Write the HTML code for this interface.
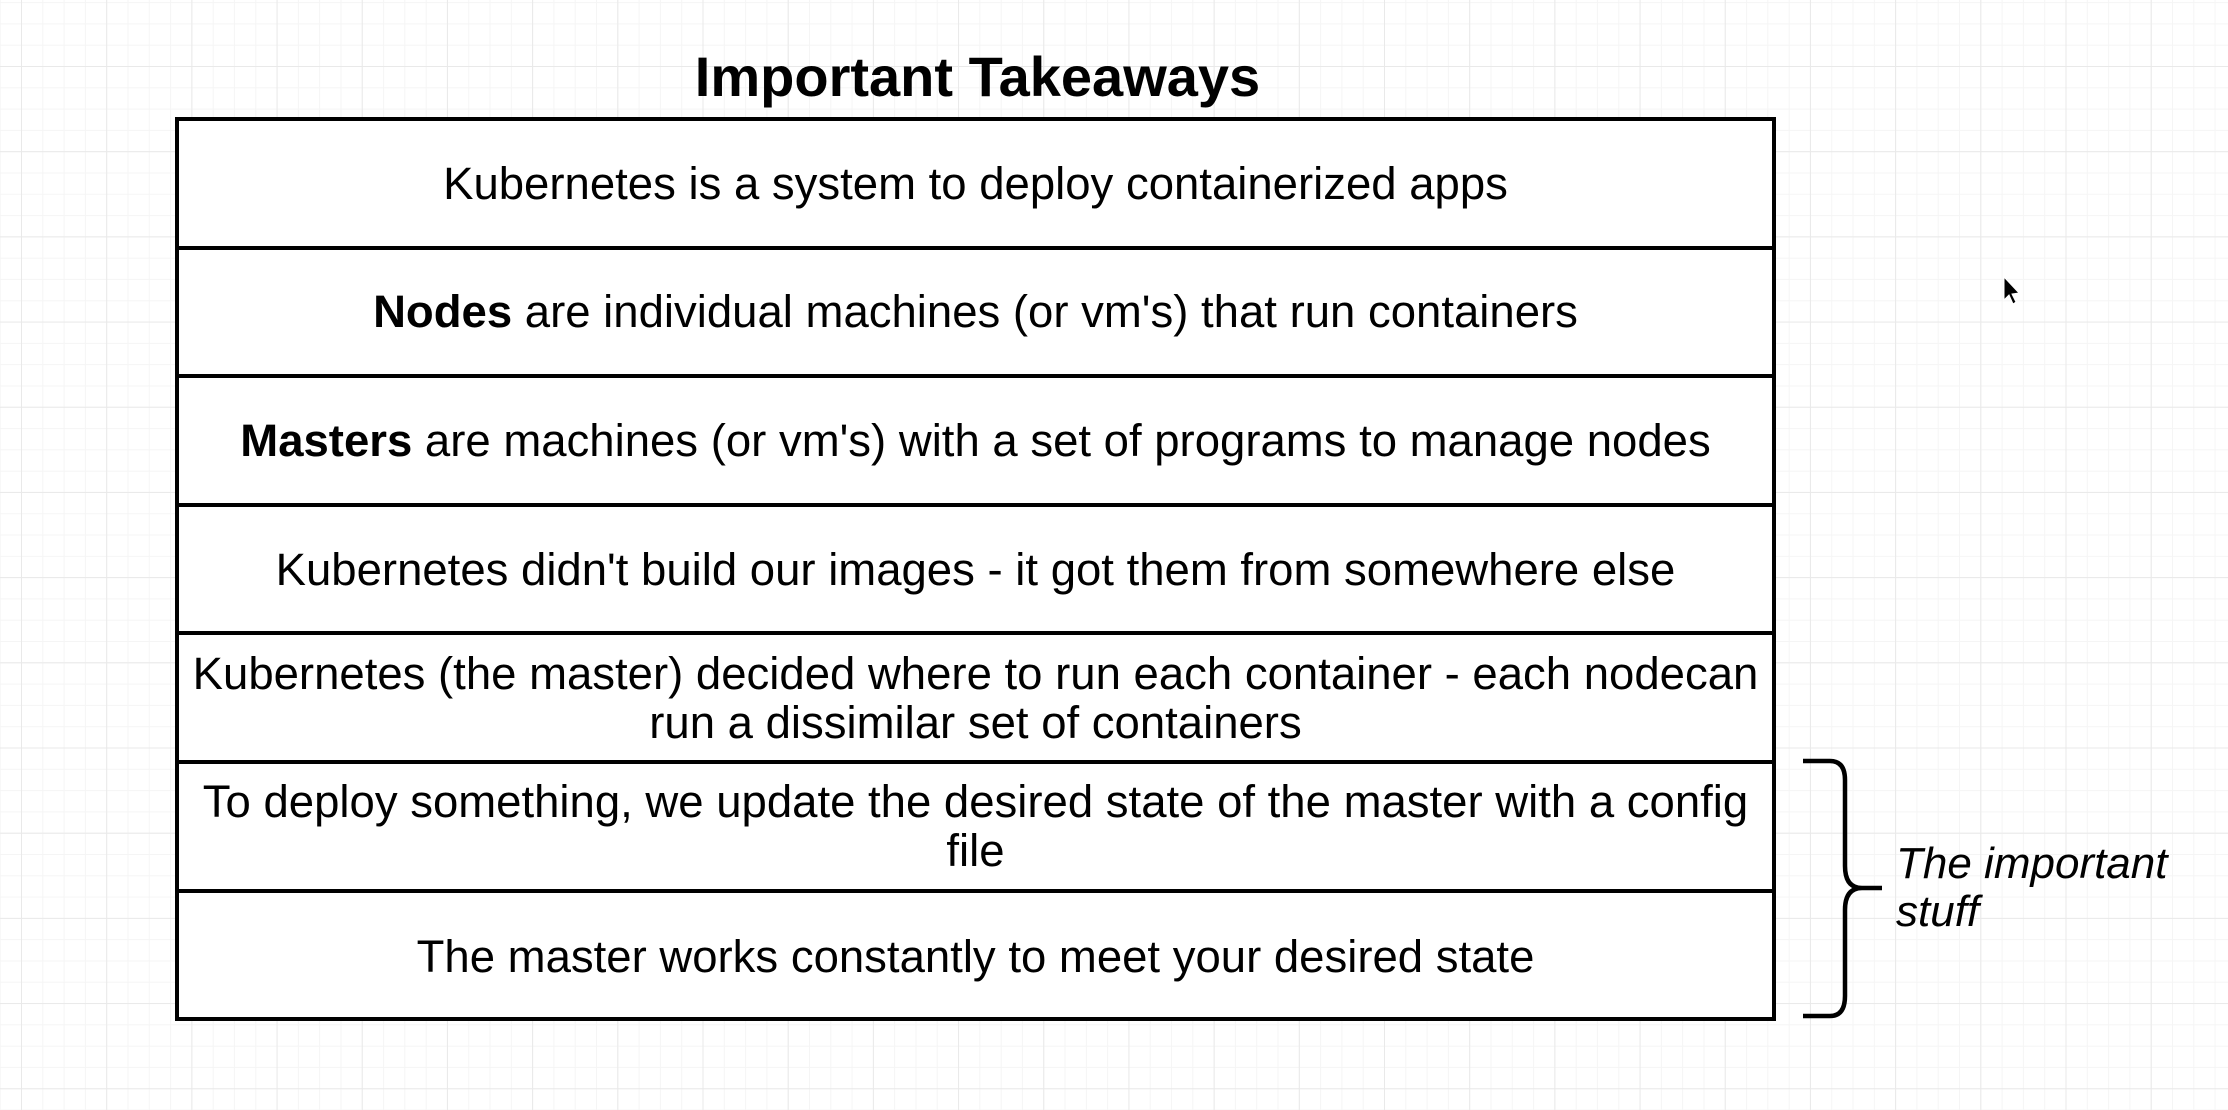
<!DOCTYPE html>
<html><head><meta charset="utf-8"><style>
html,body{margin:0;padding:0}
body{width:2228px;height:1110px;position:relative;overflow:hidden;background:#fff;
font-family:"Liberation Sans",Arial,sans-serif;
background-image:
linear-gradient(to right,#e9e9e9 1px,transparent 1px),
linear-gradient(to bottom,#e9e9e9 1px,transparent 1px),
linear-gradient(to right,#f5f5f5 1px,transparent 1px),
linear-gradient(to bottom,#f5f5f5 1px,transparent 1px);
background-size:85.2px 85.2px,85.2px 85.2px,21.3px 21.3px,21.3px 21.3px;
background-position:21px 66px,21px 66px,21px 66px,21px 66px;}
.title{position:absolute;left:0;width:1955px;top:44px;text-align:center;font-weight:bold;font-size:56px;line-height:66px;color:#000}
.tbl{position:absolute;left:175px;top:117px;width:1593px;height:896px;border:4px solid #000;background:#fff}
.row{height:128.6px;box-sizing:border-box;border-bottom:4px solid #000;display:flex;align-items:center;justify-content:center;text-align:center;font-size:45.5px;line-height:49px;padding:0 12px;color:#000}
.row:last-child{border-bottom:none}
.note{position:absolute;left:1896px;top:840px;font-style:italic;font-size:44px;line-height:48px}
</style></head><body>
<div class="title">Important Takeaways</div>
<div class="tbl">
<div class="row">Kubernetes is a system to deploy containerized apps</div>
<div class="row"><span><b>Nodes</b> are individual machines (or vm's) that run containers</span></div>
<div class="row"><span><b>Masters</b> are machines (or vm's) with a set of programs to manage nodes</span></div>
<div class="row">Kubernetes didn't build our images - it got them from somewhere else</div>
<div class="row">Kubernetes (the master) decided where to run each container - each nodecan run a dissimilar set of containers</div>
<div class="row">To deploy something, we update the desired state of the master with a config file</div>
<div class="row">The master works constantly to meet your desired state</div>
</div>
<svg style="position:absolute;left:0;top:0" width="2228" height="1110">
<path d="M1803 761 H1830 Q1845 761 1845 780 V866 Q1845 888 1862 888 H1882 M1862 888 Q1845 888 1845 910 V996 Q1845 1016 1830 1016 H1803" fill="none" stroke="#000" stroke-width="4.5"/>
<path d="M2004 277 L2004 300 L2009 295 L2013 304 L2016 302 L2012 294 L2019 293 Z" fill="#000" stroke="#fff" stroke-width="1"/>
</svg>
<div class="note">The important<br>stuff</div>
</body></html>
